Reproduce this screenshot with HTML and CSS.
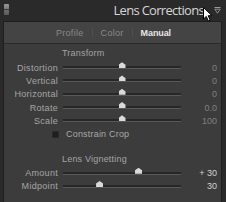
FILE: index.html
```html
<!DOCTYPE html>
<html>
<head>
<meta charset="utf-8">
<link rel="stylesheet" href="styles.css">
</head>
<body>
<div class="app">
  <div class="header">
    <div class="grip"></div>
    <div class="title">Lens Corrections</div>
    <svg class="collapse" width="7" height="7" viewBox="0 0 7 7"><path d="M0.5 0.5H6.5" stroke="#9a9a9a" stroke-width="1"/><path d="M0.8 2.2H6.2L3.5 6.2Z" fill="none" stroke="#9a9a9a" stroke-width="0.9"/></svg>
    <svg class="cursor" width="11" height="15" viewBox="0 0 11 15"><path d="M0.5 0.5V12L3.3 9.4L5.3 14L7.2 13.2L5.2 8.7H9Z" fill="#fff" stroke="#000" stroke-width="1"/></svg>
  </div>
  <div class="panel">
    <div class="tabs">
      <span class="tab">Profile</span>
      <span class="sep"></span>
      <span class="tab">Color</span>
      <span class="sep"></span>
      <span class="tab active">Manual</span>
    </div>
    <div class="section">
      <div class="heading">Transform</div>
      <div class="row"><span class="label">Distortion</span><span class="track"><span class="thumb" style="left:50%"></span></span><span class="value">0</span></div>
      <div class="row"><span class="label">Vertical</span><span class="track"><span class="thumb" style="left:50%"></span></span><span class="value">0</span></div>
      <div class="row"><span class="label">Horizontal</span><span class="track"><span class="thumb" style="left:50%"></span></span><span class="value">0</span></div>
      <div class="row"><span class="label">Rotate</span><span class="track"><span class="thumb" style="left:50%"></span></span><span class="value">0.0</span></div>
      <div class="row"><span class="label">Scale</span><span class="track"><span class="thumb" style="left:50%"></span></span><span class="value">100</span></div>
      <div class="check"><span class="box"></span><span class="check-label">Constrain Crop</span></div>
    </div>
    <div class="section second">
      <div class="heading">Lens Vignetting</div>
      <div class="row"><span class="label">Amount</span><span class="track"><span class="thumb" style="left:64%"></span></span><span class="value bright">+ 30</span></div>
      <div class="row"><span class="label">Midpoint</span><span class="track"><span class="thumb" style="left:31%"></span></span><span class="value bright">30</span></div>
    </div>
  </div>
</div>
</body>
</html>
```
FILE: styles.css
```css
* { box-sizing: border-box; }
html, body { margin: 0; padding: 0; }
body {
  width: 226px;
  height: 202px;
  overflow: hidden;
  background: #2b2a2b;
  font-family: "Liberation Sans", Arial, sans-serif;
}
.app {
  width: 226px;
  height: 202px;
  display: flex;
  flex-direction: column;
}
.header {
  position: relative;
  height: 21px;
  display: flex;
  align-items: center;
  padding-left: 4px;
  padding-right: 5px;
  background: #2b2a2b;
}
.grip {
  width: 5px;
  height: 11px;
  margin-top: -2px;
  background: linear-gradient(#9a9a9a 0, #7a7a7a 45%, #3a3a3a 45%, #3a3a3a 55%, #6e6e6e 55%, #5a5a5a 100%);
  border-radius: 1px;
}
.title {
  margin-left: auto;
  margin-right: 10px;
  font-family: "Open Sans", sans-serif;
  font-size: 13px;
  letter-spacing: -0.7px;
  color: #d6d6d6;
  margin-top: -1px;
}
.collapse {
  margin-top: -1px;
}
.cursor {
  position: absolute;
  left: 203px;
  top: 7px;
}
.panel {
  flex: 1;
  margin-left: 3px;
  width: 219px;
  background: #3c3c3c;
  border-left: 1px solid #1e1e1e;
  border-right: 1px solid #1e1e1e;
  border-top: 1px solid #1e1e1e;
}
.tabs {
  height: 22px;
  background: #444444;
  border-bottom: 1px solid #2a2a2a;
  display: flex;
  align-items: center;
  justify-content: center;
  gap: 8px;
  padding-left: 2px;
  font-size: 9px;
  color: #8a8a8a;
}
.tab { letter-spacing: 0.3px; }
.tab.active { color: #e6e6e6; font-weight: bold; letter-spacing: -0.1px; }
.sep {
  width: 1px;
  height: 9px;
  background: #505050;
}
.section {
  padding-top: 2px;
}
.section.second { padding-top: 11px; }
.heading {
  padding-left: 58px;
  height: 14px;
  line-height: 14px;
  font-size: 9px;
  color: #a4a4a4;
  letter-spacing: 0.2px;
  margin-bottom: 1px;
}
.second .heading { margin-bottom: 0; }
.row {
  display: grid;
  grid-template-columns: 54px 118px 31px;
  column-gap: 5px;
  align-items: center;
  height: 13.3px;
}
.label {
  text-align: right;
  font-size: 9px;
  color: #a6a6a6;
  letter-spacing: 0.3px;
}
.track {
  position: relative;
  height: 2px;
  background: #272727;
  border-bottom: 1px solid #585858;
  box-sizing: content-box;
}
.thumb {
  position: absolute;
  top: -4px;
  width: 7px;
  height: 6px;
  margin-left: -3.5px;
  background: #dadada;
  clip-path: polygon(50% 0, 100% 45%, 100% 100%, 0 100%, 0 45%);
}
.value {
  text-align: right;
  font-size: 9px;
  color: #808080;
}
.value.bright { color: #d2d2d2; }
.check {
  display: flex;
  align-items: center;
  height: 14px;
  padding-left: 48px;
  gap: 7px;
}
.box {
  width: 7px;
  height: 7px;
  background: #1e1e1e;
  border: 1px solid #2a2a2a;
}
.check-label {
  font-size: 9px;
  color: #a8a8a8;
  letter-spacing: 0.2px;
}
```
